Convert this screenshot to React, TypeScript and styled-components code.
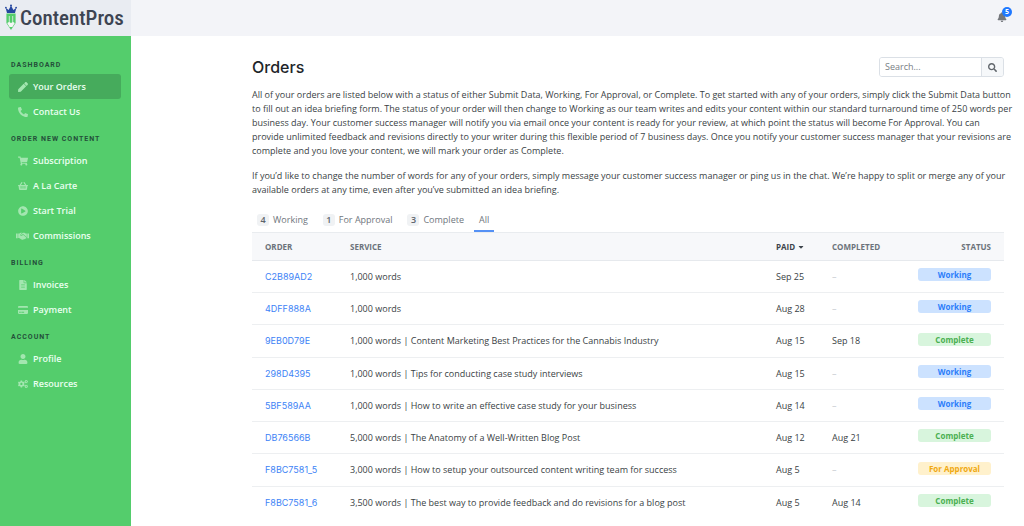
import React from 'react';
import styled, { createGlobalStyle } from 'styled-components';
import {
  FaPen, FaPhoneAlt, FaShoppingCart, FaShoppingBasket, FaPlayCircle,
  FaFileAlt, FaCreditCard, FaUser, FaCogs, FaBell, FaSearch, FaCaretDown,
} from 'react-icons/fa';

const Global = createGlobalStyle`
  * { box-sizing: border-box; }
  body {
    margin: 0;
    background: #fff;
    color: #3a3f45;
    font: 400 9px/14px "Open Sans", "Noto Sans", sans-serif;
  }
  a { text-decoration: none; }
`;

const Page = styled.div`
  display: grid;
  grid-template-columns: 131px 1fr;
  grid-template-rows: 36px 1fr;
  height: 100vh;
  overflow: hidden;
`;

const Brand = styled.a`
  display: flex;
  align-items: center;
  gap: 3px;
  padding-left: 5px;
  background: #e9ecf2;
  color: #3d4452;
  font: 500 21px/36px "Roboto Condensed", Roboto, sans-serif;
`;

const TopBar = styled.header`
  display: flex;
  justify-content: flex-end;
  align-items: center;
  padding: 0 17px 2px 0;
  background: #f3f4f8;
`;

const BellButton = styled.button`
  position: relative;
  display: flex;
  padding: 0;
  border: 0;
  background: none;
  color: #74777c;
  font-size: 10px;
`;

const Count = styled.span`
  position: absolute;
  top: -5px;
  right: -5px;
  width: 10px;
  height: 10px;
  border-radius: 50%;
  background: #1f78ff;
  color: #fff;
  font: 700 7px/10px "Open Sans", sans-serif;
  text-align: center;
`;

const Sidebar = styled.nav`
  padding: 22px 10px 0 9px;
  background: #54cd6c;
`;

const NavGroup = styled.section`
  margin-bottom: 8px;
`;

const NavTitle = styled.h2`
  margin: 0 0 2px;
  padding-left: 2px;
  color: #24503a;
  font: 700 7px/14px Roboto, "Open Sans", sans-serif;
  letter-spacing: 1px;
  text-transform: uppercase;
`;

const NavLink = styled.a<{ $active?: boolean }>`
  display: flex;
  align-items: center;
  height: 25px;
  padding-left: 7px;
  gap: 4px;
  border-radius: 3px;
  background: ${p => (p.$active ? '#46ab5c' : 'transparent')};
  color: #eafff0;
  font-weight: 600;
`;

const NavIcon = styled.span`
  display: flex;
  justify-content: center;
  width: 13px;
  color: #a3e6b0;
  svg { width: auto; height: 10px; }
`;

const Main = styled.main`
  min-width: 0;
  padding: 20px 20px 0 121px;
`;

const TitleRow = styled.div`
  display: flex;
  justify-content: space-between;
  align-items: center;
  margin-bottom: 10px;
`;

const Title = styled.h1`
  margin: 0;
  color: #212529;
  font: 500 16px/22px Inter, "Open Sans", sans-serif;
`;

const SearchForm = styled.form`
  display: flex;
  width: 125px;
  height: 20px;
  border: 1px solid #dbe0e6;
  border-radius: 3px;
  overflow: hidden;
`;

const SearchInput = styled.input`
  flex: 1;
  min-width: 0;
  padding: 0 5px;
  border: 0;
  font: inherit;
  &::placeholder { color: #787e85; opacity: 1; }
`;

const SearchButton = styled.button`
  display: flex;
  justify-content: center;
  align-items: center;
  width: 22px;
  padding: 0;
  border: 0;
  border-left: 1px solid #dbe0e6;
  background: #f6f8fa;
  color: #62676d;
  font-size: 9px;
`;

const Copy = styled.p`
  margin: 0 0 11px;
  white-space: nowrap;
`;

const Tabs = styled.div`
  display: flex;
  gap: 5px;
  margin-top: 13px;
`;

const Tab = styled.button<{ $active?: boolean }>`
  display: flex;
  align-items: center;
  gap: 4px;
  height: 22px;
  padding: 0 5px;
  border: 0;
  border-bottom: 2px solid ${p => (p.$active ? '#5591f5' : 'transparent')};
  background: none;
  color: #6f767d;
  font: inherit;
`;

const TabCount = styled.span`
  width: 12px;
  border-radius: 3px;
  background: #f0f2f4;
  color: #5d646b;
  font-weight: 600;
  line-height: 12px;
  text-align: center;
`;

const OrdersTable = styled.table`
  width: 100%;
  border-collapse: separate;
  border-spacing: 0;
  table-layout: fixed;
`;

const Head = styled.th<{ $width?: string; $sorted?: boolean; $right?: boolean }>`
  width: ${p => p.$width ?? 'auto'};
  height: 29px;
  padding: 0 13px 0 ${p => (p.$right ? '0' : '13px')};
  border-top: 1px solid #e9ecef;
  border-bottom: 1px solid #e6e9ed;
  background: #f7f8fa;
  color: ${p => (p.$sorted ? '#3d444b' : '#6c737b')};
  font: 700 8px/14px "Open Sans", sans-serif;
  text-align: ${p => (p.$right ? 'right' : 'left')};
  text-transform: uppercase;
  white-space: nowrap;
  svg { vertical-align: middle; }
`;

const Row = styled.tr`
  height: 32px;
  &:nth-child(4n + 3) { height: 33px; }
  &:last-child td { border-bottom-color: transparent; }
`;

const Cell = styled.td<{ $muted?: boolean; $top?: boolean }>`
  padding: ${p => (p.$top ? '0 13px 4px' : '0 0 0 13px')};
  border-bottom: 1px solid #edeff1;
  color: ${p => (p.$muted ? '#c6cacf' : 'inherit')};
  white-space: nowrap;
`;

const OrderLink = styled.a`
  color: #3d83f6;
  font-family: Inter, "Open Sans", sans-serif;
`;

const tones = {
  Working: ['#cce2ff', '#2d7dfa'],
  Complete: ['#d8f5dd', '#4bb051'],
  'For Approval': ['#fff1cc', '#f0a912'],
};
type Status = keyof typeof tones;

const Badge = styled.span<{ $status: Status }>`
  display: block;
  width: 73px;
  margin-left: auto;
  border-radius: 3px;
  background: ${p => tones[p.$status][0]};
  color: ${p => tones[p.$status][1]};
  font-size: 8px;
  font-weight: 700;
  line-height: 13px;
  text-align: center;
`;

const Handshake = () => (
  <svg viewBox="0 0 26 20" fill="currentColor" aria-hidden="true">
    <path d="M0 5H3.4V14.6H0ZM22.6 5H26V14.6H22.6Z" />
    <path d="M4.4 5H7L9 3.6H12L8.6 7.4C8.2 9.8 11 10.4 12.6 8.8L14.2 7.6 20.6 13C21.4 14.2 20.2 15.6 18.8 15.2 18.2 16.8 16.4 17 15.4 16.4 14.2 17.8 12.4 17.8 11 16.8L6.2 13.8H4.4Z" />
    <path d="M21.6 5H19L17 3.6H13.6L9.8 7.4C10 8.6 11.2 8.4 12 7.6L14.2 6 21 11.8 21.6 13.4Z" />
  </svg>
);

const nav = [
  { title: 'Dashboard', items: [['Your Orders', FaPen], ['Contact Us', FaPhoneAlt]] },
  { title: 'Order new content', items: [['Subscription', FaShoppingCart], ['A La Carte', FaShoppingBasket], ['Start Trial', FaPlayCircle], ['Commissions', Handshake]] },
  { title: 'Billing', items: [['Invoices', FaFileAlt], ['Payment', FaCreditCard]] },
  { title: 'Account', items: [['Profile', FaUser], ['Resources', FaCogs]] },
] as { title: string; items: [string, React.ComponentType][] }[];

const tabs = [['4', 'Working'], ['1', 'For Approval'], ['3', 'Complete'], ['', 'All']];

const orders: [string, string, string, string, Status][] = [
  ['C2B89AD2', '1,000 words', 'Sep 25', '', 'Working'],
  ['4DFF888A', '1,000 words', 'Aug 28', '', 'Working'],
  ['9EB0D79E', '1,000 words | Content Marketing Best Practices for the Cannabis Industry', 'Aug 15', 'Sep 18', 'Complete'],
  ['298D4395', '1,000 words | Tips for conducting case study interviews', 'Aug 15', '', 'Working'],
  ['5BF589AA', '1,000 words | How to write an effective case study for your business', 'Aug 14', '', 'Working'],
  ['DB76566B', '5,000 words | The Anatomy of a Well-Written Blog Post', 'Aug 12', 'Aug 21', 'Complete'],
  ['F8BC7581_5', '3,000 words | How to setup your outsourced content writing team for success', 'Aug 5', '', 'For Approval'],
  ['F8BC7581_6', '3,500 words | The best way to provide feedback and do revisions for a blog post', 'Aug 5', 'Aug 14', 'Complete'],
];

const Logo = () => (
  <svg width="12" height="28" viewBox="0 0 12 28" aria-hidden="true">
    <path d="M2 9 0.6 3.8 3.6 6 6 1.6 8.4 6 11.4 3.8 10 9Z" fill="#2446a0" />
    <circle cx="6" cy="1.6" r="1" fill="#2446a0" />
    <circle cx="0.9" cy="3.6" r="0.9" fill="#2446a0" />
    <circle cx="11.1" cy="3.6" r="0.9" fill="#2446a0" />
    <path d="M1.4 9.6H10.6V19L6 26 1.4 19Z" fill="#54cd6c" />
    <path d="M4.3 12V19M7.7 12V19" stroke="#e9ecf2" strokeWidth="0.8" />
    <path d="M2.2 19 4 18 6 19 8 18 9.8 19 7.4 23H4.6Z" fill="#f4f7f6" />
  </svg>
);

export default function App() {
  return (
    <Page>
      <Global />
      <Brand href="#"><Logo />ContentPros</Brand>
      <TopBar>
        <BellButton aria-label="Notifications"><FaBell /><Count>5</Count></BellButton>
      </TopBar>
      <Sidebar>
        {nav.map(group => (
          <NavGroup key={group.title}>
            <NavTitle>{group.title}</NavTitle>
            {group.items.map(([label, Icon]) => (
              <NavLink key={label} href="#" $active={label === 'Your Orders'}>
                <NavIcon><Icon /></NavIcon>{label}
              </NavLink>
            ))}
          </NavGroup>
        ))}
      </Sidebar>
      <Main>
        <TitleRow>
          <Title>Orders</Title>
          <SearchForm>
            <SearchInput aria-label="Search" placeholder="Search..." />
            <SearchButton type="button" aria-label="Search"><FaSearch /></SearchButton>
          </SearchForm>
        </TitleRow>
        <Copy>
          All of your orders are listed below with a status of either Submit Data, Working, For Approval, or Complete. To get started with any of your orders, simply click the Submit Data button<br />
          to fill out an idea briefing form. The status of your order will then change to Working as our team writes and edits your content within our standard turnaround time of 250 words per<br />
          business day. Your customer success manager will notify you via email once your content is ready for your review, at which point the status will become For Approval. You can<br />
          provide unlimited feedback and revisions directly to your writer during this flexible period of 7 business days. Once you notify your customer success manager that your revisions are<br />
          complete and you love your content, we will mark your order as Complete.
        </Copy>
        <Copy>
          If you’d like to change the number of words for any of your orders, simply message your customer success manager or ping us in the chat. We’re happy to split or merge any of your<br />
          available orders at any time, even after you’ve submitted an idea briefing.
        </Copy>
        <Tabs>
          {tabs.map(([count, label]) => (
            <Tab key={label} $active={label === 'All'}>
              {count && <TabCount>{count}</TabCount>}{label}
            </Tab>
          ))}
        </Tabs>
        <OrdersTable>
          <thead>
            <tr>
              <Head $width="85px">Order</Head>
              <Head>Service</Head>
              <Head $width="56px" $sorted>Paid <FaCaretDown /></Head>
              <Head $width="86px">Completed</Head>
              <Head $width="99px" $right>Status</Head>
            </tr>
          </thead>
          <tbody>
            {orders.map(([id, service, paid, completed, status]) => (
              <Row key={id}>
                <Cell><OrderLink href="#">{id}</OrderLink></Cell>
                <Cell>{service}</Cell>
                <Cell>{paid}</Cell>
                <Cell $muted={!completed}>{completed || '–'}</Cell>
                <Cell $top><Badge $status={status}>{status}</Badge></Cell>
              </Row>
            ))}
          </tbody>
        </OrdersTable>
      </Main>
    </Page>
  );
}
